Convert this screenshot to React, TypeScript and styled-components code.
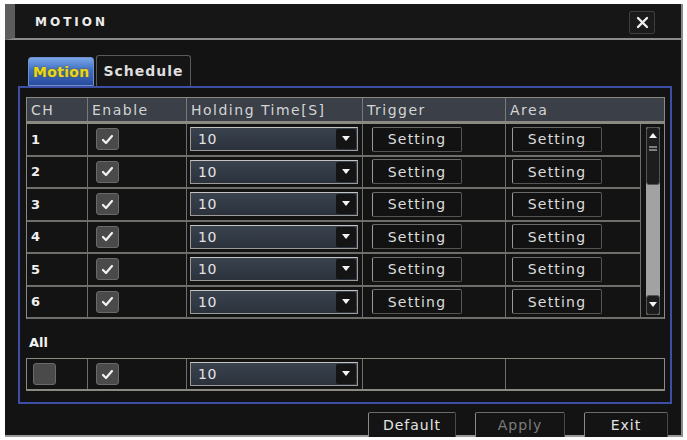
import * as React from "react";
import styled, { createGlobalStyle } from "styled-components";

const GlobalStyle = createGlobalStyle`
    html, body {
        margin: 0;
        padding: 0;
        background: #fdfdfd;
    }
    body {
        font-family: "DejaVu Sans", "Liberation Sans", sans-serif;
    }
`;

const Window = styled.div`
    margin: 4px 0 0 5px;
    width: 678px;
    height: 433px;
    background: #131313;
    border-right: 2px solid #8a8a8a;
    border-bottom: 2px solid #9a9a9a;
    box-sizing: border-box;
    display: flex;
    flex-direction: column;
`;

const TitleBar = styled.header`
    height: 36px;
    flex: 0 0 auto;
    box-sizing: border-box;
    background: #161616;
    border-left: 10px solid #5c5c5c;
    border-bottom: 2px solid #8c8c8c;
    display: flex;
    align-items: center;
    justify-content: space-between;
    padding: 2px 26px 0 20px;
`;

const Title = styled.span`
    color: #ececec;
    font-weight: bold;
    font-size: 12px;
    letter-spacing: 3px;
`;

const Close = styled.button`
    width: 26px;
    height: 23px;
    padding: 0;
    background: #1b1b1b;
    border: 1px solid #3e3e3e;
    border-radius: 2px;
    display: flex;
    align-items: center;
    justify-content: center;
`;

const Tabs = styled.nav`
    flex: 0 0 auto;
    display: flex;
    align-items: flex-end;
    gap: 2px;
    margin: 15px 0 0 23px;
    height: 31px;
`;

const Tab = styled.div<{ $active?: boolean }>`
    height: ${p => (p.$active ? 29 : 31)}px;
    box-sizing: border-box;
    padding: 0 ${p => (p.$active ? 4 : 6)}px;
    display: flex;
    align-items: center;
    font-size: 14px;
    font-weight: bold;
    border-radius: 3px 3px 0 0;
    ${p =>
        p.$active
            ? `
        background: linear-gradient(180deg, #7aa6e8 0%, #3f6fc4 45%, #2a4c9c 100%);
        color: #e8d81c;
        border: 1px solid #6d8fd0;
        letter-spacing: 0.3px;
        text-shadow: 0 0 2px #6a5a00;
    `
            : `
        background: #151515;
        color: #dedede;
        border: 1px solid #5a5a5a;
        border-bottom: none;
        letter-spacing: 1px;
    `}
`;

const Panel = styled.section`
    flex: 0 0 auto;
    margin-left: 13px;
    width: 654px;
    height: 318px;
    box-sizing: border-box;
    border: 2px solid #3c4ea6;
    padding: 9px 0 0 6px;
`;

const Table = styled.div`
    width: 639px;
    border: 1px solid #8a8a82;
    border-bottom: none;
    box-sizing: border-box;
`;

const HeaderRow = styled.div`
    display: grid;
    grid-template-columns: 61px 99px 176px 143px 1fr;
    height: 26px;
    box-sizing: border-box;
    background: #3a3f48;
    border-bottom: 3px solid #8a8a82;
`;

const HeadCell = styled.div<{ $last?: boolean }>`
    color: #d4d4d4;
    font-size: 14px;
    letter-spacing: 1.5px;
    display: flex;
    align-items: center;
    padding-left: 4px;
    border-right: ${p => (p.$last ? "none" : "1px solid #7a7a74")};
`;

const Body = styled.div`
    display: flex;
`;

const Rows = styled.div`
    width: 614px;
`;

const Row = styled.div`
    display: grid;
    grid-template-columns: 61px 99px 176px 143px 135px;
    height: 32.5px;
    border-bottom: 2px solid #6e6e6a;
    box-sizing: border-box;
`;

const Cell = styled.div<{ $pad?: number; $last?: boolean }>`
    display: flex;
    align-items: center;
    padding-left: ${p => p.$pad ?? 4}px;
    border-right: ${p => (p.$last ? "none" : "1px solid #6e6e6a")};
    color: #f0f0f0;
    font-size: 13px;
    font-weight: bold;
`;

const Check = styled.div`
    width: 21px;
    height: 20px;
    border-radius: 3px;
    background: #4a4a4a;
    border: 1px solid #6a6a6a;
    display: flex;
    align-items: center;
    justify-content: center;
`;

const Select = styled.div`
    width: 168px;
    height: 24px;
    box-sizing: border-box;
    border: 1px solid #9a9a9a;
    border-top-color: #c4c4c4;
    background: linear-gradient(180deg, #3a424e 0%, #2b323c 100%);
    display: flex;
    align-items: center;
    justify-content: space-between;
    padding-left: 7px;
    color: #e4e4e4;
    font-size: 14px;
    font-weight: normal;
    letter-spacing: 0.5px;
`;

const Arrow = styled.span`
    width: 20px;
    height: 20px;
    margin-right: 1px;
    background: #141414;
    border-radius: 2px;
    display: flex;
    align-items: center;
    justify-content: center;
`;

const SetButton = styled.button`
    width: 90px;
    height: 25px;
    background: #121212;
    border: 1px solid #555;
    border-left-color: #9a9a9a;
    border-top-color: #6a6a6a;
    border-radius: 2px;
    color: #dcdcdc;
    font-family: "DejaVu Sans", "Liberation Sans", sans-serif;
    font-size: 14px;
    letter-spacing: 1.2px;
    padding: 0;
`;

const Scroll = styled.div`
    width: 25px;
    height: 195px;
    border-bottom: 2px solid #6e6e6a;
    box-sizing: border-box;
    padding: 3px 4px 2px 5px;
    display: flex;
`;

const Track = styled.div`
    flex: 1;
    background: #a2a2a2;
    border-radius: 2px;
    display: flex;
    flex-direction: column;
    justify-content: space-between;
`;

const Thumb = styled.div`
    height: 58px;
    background: #1d1d1d;
    border: 1px solid #555;
    border-radius: 3px;
    display: flex;
    flex-direction: column;
    align-items: center;
    gap: 8px;
    padding-top: 4px;
    box-sizing: border-box;
`;

const DownKey = styled.div`
    height: 18px;
    background: #1d1d1d;
    border: 1px solid #555;
    border-radius: 3px;
    display: flex;
    align-items: center;
    justify-content: center;
`;

const AllLabel = styled.div`
    color: #f2f2f2;
    font-size: 13px;
    font-weight: bold;
    margin: 13px 0 6px 3px;
    height: 20px;
    display: flex;
    align-items: center;
`;

const AllRow = styled.div`
    display: grid;
    grid-template-columns: 61px 99px 176px 143px 1fr;
    width: 639px;
    height: 33px;
    box-sizing: border-box;
    border: 1px solid #8a8a82;
    border-bottom-width: 2px;
`;

const Footer = styled.footer`
    display: flex;
    justify-content: flex-end;
    gap: 19px;
    padding-right: 13px;
    margin-top: 8px;
`;

const FootButton = styled.button<{ $w: number; $dim?: boolean }>`
    width: ${p => p.$w}px;
    height: 26px;
    background: #141414;
    border: 1px solid #4a4a4a;
    border-left-color: #8a8a8a;
    border-top-color: #6a6a6a;
    border-radius: 2px;
    color: ${p => (p.$dim ? "#7c7c7c" : "#e4e4e4")};
    font-family: "DejaVu Sans", "Liberation Sans", sans-serif;
    font-size: 14px;
    letter-spacing: 1px;
    padding: 0;
`;

const Tick = () => (
    <svg width="13" height="11" viewBox="0 0 13 11">
        <path d="M2 6 L5 9 L11 2" stroke="#f2f2f2" strokeWidth="2.2" fill="none" strokeLinecap="round" strokeLinejoin="round" />
    </svg>
);

const Tri = ({ up }: { up?: boolean }) => (
    <svg width="10" height="6" viewBox="0 0 10 6">
        <path d={up ? "M1 6 L5 1 L9 6 Z" : "M1 0 L5 5 L9 0 Z"} fill="#f4f4f4" />
    </svg>
);

const Dropdown = () => (
    <Select>
        10
        <Arrow>
            <Tri />
        </Arrow>
    </Select>
);

const channels = [1, 2, 3, 4, 5, 6];

const App = () => (
    <>
        <GlobalStyle />
        <Window>
            <TitleBar>
                <Title>MOTION</Title>
                <Close>
                    <svg width="13" height="13" viewBox="0 0 13 13">
                        <path d="M2 2 L11 11 M11 2 L2 11" stroke="#eee" strokeWidth="2.4" strokeLinecap="round" />
                    </svg>
                </Close>
            </TitleBar>
            <Tabs>
                <Tab $active>Motion</Tab>
                <Tab>Schedule</Tab>
            </Tabs>
            <Panel>
                <Table>
                    <HeaderRow>
                        <HeadCell>CH</HeadCell>
                        <HeadCell>Enable</HeadCell>
                        <HeadCell>Holding Time[S]</HeadCell>
                        <HeadCell>Trigger</HeadCell>
                        <HeadCell $last>Area</HeadCell>
                    </HeaderRow>
                    <Body>
                        <Rows>
                            {channels.map(ch => (
                                <Row key={ch}>
                                    <Cell>{ch}</Cell>
                                    <Cell $pad={8}>
                                        <Check>
                                            <Tick />
                                        </Check>
                                    </Cell>
                                    <Cell $pad={3}>
                                        <Dropdown />
                                    </Cell>
                                    <Cell $pad={9}>
                                        <SetButton>Setting</SetButton>
                                    </Cell>
                                    <Cell $pad={6}>
                                        <SetButton>Setting</SetButton>
                                    </Cell>
                                </Row>
                            ))}
                        </Rows>
                        <Scroll>
                            <Track>
                                <Thumb>
                                    <Tri up />
                                    <svg width="10" height="6" viewBox="0 0 10 6">
                                        <path d="M1 1 H9 M1 4 H9" stroke="#ddd" strokeWidth="1.2" />
                                    </svg>
                                </Thumb>
                                <DownKey>
                                    <Tri />
                                </DownKey>
                            </Track>
                        </Scroll>
                    </Body>
                </Table>
                <AllLabel>All</AllLabel>
                <AllRow>
                    <Cell $pad={6}>
                        <Check />
                    </Cell>
                    <Cell $pad={8}>
                        <Check>
                            <Tick />
                        </Check>
                    </Cell>
                    <Cell $pad={3}>
                        <Dropdown />
                    </Cell>
                    <Cell />
                    <Cell $last />
                </AllRow>
            </Panel>
            <Footer>
                <FootButton $w={88}>Default</FootButton>
                <FootButton $w={90} $dim>Apply</FootButton>
                <FootButton $w={84}>Exit</FootButton>
            </Footer>
        </Window>
    </>
);

export default App;
